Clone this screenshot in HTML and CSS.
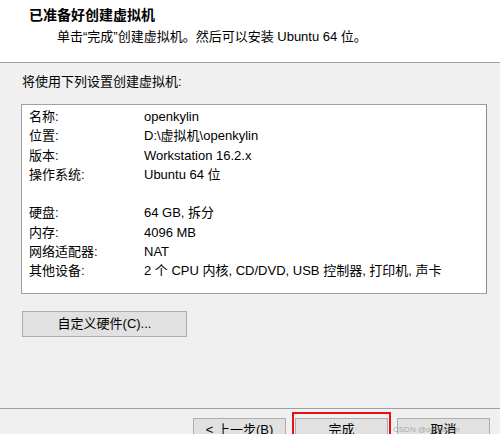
FILE: index.html
```html
<!DOCTYPE html>
<html lang="zh-CN">
<head>
<meta charset="utf-8">
<title>新建虚拟机向导</title>
<link rel="stylesheet" href="styles.css">
</head>
<body>
<div class="window">
  <div class="header">
    <div class="title">已准备好创建虚拟机</div>
    <div class="subtitle">单击“完成”创建虚拟机。然后可以安装 Ubuntu 64 位。</div>
  </div>
  <div class="content">
    <div class="intro">将使用下列设置创建虚拟机:</div>
    <div class="summary">
      <div class="row"><span class="label">名称:</span><span class="value">openkylin</span></div>
      <div class="row"><span class="label">位置:</span><span class="value">D:\虚拟机\openkylin</span></div>
      <div class="row"><span class="label">版本:</span><span class="value">Workstation 16.2.x</span></div>
      <div class="row"><span class="label">操作系统:</span><span class="value">Ubuntu 64 位</span></div>
      <div class="row blank"></div>
      <div class="row"><span class="label">硬盘:</span><span class="value">64 GB, 拆分</span></div>
      <div class="row"><span class="label">内存:</span><span class="value">4096 MB</span></div>
      <div class="row"><span class="label">网络适配器:</span><span class="value">NAT</span></div>
      <div class="row"><span class="label">其他设备:</span><span class="value">2 个 CPU 内核, CD/DVD, USB 控制器, 打印机, 声卡</span></div>
    </div>
    <div class="custom-wrap"><button class="btn custom">自定义硬件(C)...</button></div>
  </div>
  <div class="footer">
    <button class="btn nav">&lt; 上一步(B)</button>
    <button class="btn nav">完成</button>
    <button class="btn nav">取消</button>
    <div class="highlight"></div>
    <div class="watermark">CSDN @openkylin</div>
  </div>
</div>
</body>
</html>
```
FILE: styles.css
```css
* { box-sizing: border-box; }
html, body {
  margin: 0;
  padding: 0;
  background: #f0f0f0;
}
body {
  font-family: "Liberation Sans", "Noto Sans CJK SC", sans-serif;
  font-size: 13px;
  color: #000;
}
.window {
  width: 500px;
  height: 434px;
  overflow: hidden;
  display: flex;
  flex-direction: column;
  background: #f0f0f0;
}
.header {
  height: 63px;
  background: #fff;
  border-bottom: 1px solid #a0a0a0;
  padding-top: 6px;
  flex: none;
}
.title {
  font-weight: bold;
  font-size: 14px;
  line-height: 19px;
  padding-left: 29px;
}
.subtitle {
  line-height: 19px;
  padding-left: 57px;
  margin-top: 2px;
}
.content {
  height: 345px;
  flex: none;
  padding-top: 9px;
}
.intro {
  line-height: 19px;
  padding-left: 22px;
}
.summary {
  margin: 13px 0 0 21px;
  width: 466px;
  height: 190px;
  background: #fff;
  border: 1px solid #a0a0a0;
  border-right-color: #8c8c8c;
  padding: 2px 0 0 7px;
}
.row {
  display: grid;
  grid-template-columns: 115px 1fr;
  line-height: 19.25px;
  height: 19.25px;
  white-space: nowrap;
}
.custom-wrap {
  padding: 17px 0 0 22px;
}
.btn {
  font-family: inherit;
  font-size: 13px;
  color: #000;
  background: #e1e1e1;
  border: 1px solid #adadad;
  padding: 0;
  margin: 0;
}
.custom {
  width: 165px;
  height: 26px;
  line-height: 24px;
}
.footer {
  position: relative;
  flex: 1;
  border-top: 1px solid #a0a0a0;
  padding: 9px 0 0 193px;
  display: flex;
  gap: 9px;
  align-items: flex-start;
}
.nav {
  width: 93px;
  height: 23px;
  line-height: 21px;
  flex: none;
}
.highlight {
  position: absolute;
  left: 292px;
  top: 3px;
  width: 99px;
  height: 40px;
  border: 2px solid #e81010;
}
.watermark {
  position: absolute;
  left: 393px;
  top: 16px;
  font-size: 8px;
  line-height: 10px;
  color: rgba(90, 90, 90, 0.45);
  white-space: nowrap;
}
```
